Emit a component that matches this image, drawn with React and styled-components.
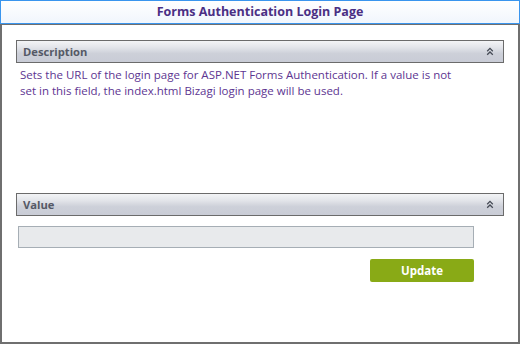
import React from "react";
import styled, { createGlobalStyle } from "styled-components";

const Global = createGlobalStyle`
  html, body { margin: 0; padding: 0; background: #ffffff; }
  body { width: 520px; height: 344px; overflow: hidden; font-family: "Open Sans", "Noto Sans", sans-serif; }
  * { box-sizing: border-box; }
`;

const Window = styled.div`
  width: 520px;
  height: 344px;
  display: flex;
  flex-direction: column;
  background: #ffffff;
`;

const TitleBar = styled.div`
  height: 24px;
  border: 1px solid #3a95ee;
  background: linear-gradient(#ffffff, #f1f6fd);
  display: flex;
  align-items: center;
  justify-content: center;
`;

const Title = styled.h1`
  margin: 0;
  font-family: "Open Sans", "Noto Sans", sans-serif;
  font-size: 12.5px;
  font-weight: 700;
  color: #4a2f84;
  line-height: 1;
  padding-top: 1px;
`;

const Body = styled.div`
  flex: 1;
  border: 2px solid #6f6f6f;
  border-top-width: 1px;
  padding: 15px 14px 0 14px;
  display: flex;
  flex-direction: column;
`;

const Section = styled.section`
  display: flex;
  flex-direction: column;
  min-height: ${(p) => p.$minHeight || 0}px;
`;

const SectionHeader = styled.div`
  height: 23px;
  border: 1px solid #6b6b6b;
  background: linear-gradient(#f3f4f6 0%, #e3e5ea 30%, #cdd0d9 60%, #c9ccd6 100%);
  display: flex;
  align-items: center;
  justify-content: space-between;
  padding: 0 9px 0 6px;
`;

const HeaderLabel = styled.span`
  font-family: "Open Sans", "Noto Sans", sans-serif;
  font-size: 11.2px;
  font-weight: 700;
  color: #555966;
`;

const Description = styled.p`
  margin: 4px 0 0 0;
  padding: 0 0 0 4px;
  font-family: "Open Sans", "Noto Sans", sans-serif;
  font-size: 11.5px;
  line-height: 16px;
  color: #5d3591;
`;

const ValueInput = styled.input`
  margin: 10px 0 0 2px;
  width: 456px;
  height: 22px;
  border: 1px solid #a6aeb5;
  background: #e8eaec;
  outline: none;
  padding: 0 4px;
`;

const Actions = styled.div`
  width: 458px;
  display: flex;
  justify-content: flex-end;
  margin-top: 11px;
`;

const Button = styled.button`
  width: 104px;
  height: 23px;
  border: none;
  border-radius: 2px;
  background: #89aa16;
  color: #ffffff;
  font-family: "Open Sans", "Noto Sans", sans-serif;
  font-size: 11.5px;
  font-weight: 700;
  padding: 0;
  cursor: pointer;
`;

const Collapse = () => (
  <svg width="8" height="9" viewBox="0 0 8 9" aria-hidden="true">
    <path d="M1.2 4.2 L4 1.4 L6.8 4.2" fill="none" stroke="#454a55" strokeWidth="1.3" />
    <path d="M1.2 7.8 L4 5 L6.8 7.8" fill="none" stroke="#454a55" strokeWidth="1.3" />
  </svg>
);

export default function App() {
  return (
    <>
      <Global />
      <Window>
        <TitleBar>
          <Title>Forms Authentication Login Page</Title>
        </TitleBar>
        <Body>
          <Section $minHeight={153}>
            <SectionHeader>
              <HeaderLabel>Description</HeaderLabel>
              <Collapse />
            </SectionHeader>
            <Description>
              Sets the URL of the login page for ASP.NET Forms Authentication. If a value is not
              <br />
              set in this field, the index.html Bizagi login page will be used.
            </Description>
          </Section>
          <Section>
            <SectionHeader>
              <HeaderLabel>Value</HeaderLabel>
              <Collapse />
            </SectionHeader>
            <ValueInput type="text" />
            <Actions>
              <Button>Update</Button>
            </Actions>
          </Section>
        </Body>
      </Window>
    </>
  );
}
